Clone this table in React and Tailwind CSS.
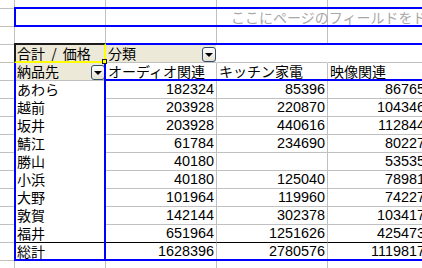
import React from "react";

// column widths incl. the 1px gridline on the right
const W = ["w-[15px]", "w-[91px]", "w-[111px]", "w-[111px]", "w-[100px]"];

const data = [
  ["あわら", "182324", "85396", "86765"],
  ["越前", "203928", "220870", "104346"],
  ["坂井", "203928", "440616", "112844"],
  ["鯖江", "61784", "234690", "80227"],
  ["勝山", "40180", "", "53535"],
  ["小浜", "40180", "125040", "78981"],
  ["大野", "101964", "119960", "74227"],
  ["敦賀", "142144", "302378", "103417"],
  ["福井", "651964", "1251626", "425473"],
];

function Cell({ i, r = "border-r-[#c0c0c0]", b = "border-b-[#c0c0c0]", className = "", children }) {
  return (
    <div className={`${W[i]} ${r} ${b} flex shrink-0 items-center border-r border-b ${className}`}>
      {children}
    </div>
  );
}

function EmptyRow({ h = "h-[18px]" }) {
  return (
    <div className={`flex ${h}`}>
      {W.map((_, i) => (
        <Cell key={i} i={i} />
      ))}
    </div>
  );
}

function DropButton() {
  return (
    <span className="flex h-[15px] w-[14px] items-center justify-center rounded-[3px] border border-[#2f4d69] bg-linear-to-b from-white to-[#e4e1d2]">
      <span className="h-0 w-0 border-x-[4px] border-t-[4px] border-x-transparent border-t-black" />
    </span>
  );
}

function Num({ children }) {
  return <span className="font-['Liberation_Sans',sans-serif] text-[14.4px]">{children}</span>;
}

function DataRow({ label, c, d, e, last }) {
  const b = last ? "border-b-black" : "border-b-[#c0c0c0]";
  return (
    <div className="flex h-[18px]">
      <Cell i={0} />
      <Cell i={1} b={last ? "border-b-black" : "border-b-white"} className="pl-[2px]">
        {label}
      </Cell>
      <Cell i={2} b={b} className="justify-end pr-[2px]">
        <Num>{c}</Num>
      </Cell>
      <Cell i={3} b={b} className="justify-end pr-[2px]">
        <Num>{d}</Num>
      </Cell>
      <Cell i={4} b={b} className="justify-end pr-[2px]">
        <Num>{e}</Num>
      </Cell>
    </div>
  );
}

export default function App() {
  return (
    <div className="relative h-[268px] w-[422px] overflow-hidden bg-white font-['Noto_Sans_CJK_JP',sans-serif] text-[14px] leading-[17px] text-black">
      <div className="flex flex-col">
        <EmptyRow h="h-[9px]" />
        <EmptyRow />
        <EmptyRow />

        {/* field buttons row */}
        <div className="flex h-[18px]">
          <Cell i={0} />
          <Cell i={1} className="bg-[#ece9d8] pl-[2px] whitespace-nowrap [word-spacing:3px]">
            合計 / 価格
          </Cell>
          <Cell i={2} r="border-r-white" className="items-end justify-between bg-[#ece9d8] pl-[2px]">
            <span className="self-center">分類</span>
            <DropButton />
          </Cell>
          <Cell i={3} r="border-r-white" />
          <Cell i={4} r="border-r-white" />
        </div>

        {/* header labels */}
        <div className="flex h-[18px]">
          <Cell i={0} />
          <Cell i={1} className="items-end justify-between bg-[#ece9d8] pl-[2px]">
            <span className="self-center">納品先</span>
            <DropButton />
          </Cell>
          <Cell i={2} className="pl-[2px] whitespace-nowrap">オーディオ関連</Cell>
          <Cell i={3} className="pl-[2px] whitespace-nowrap">キッチン家電</Cell>
          <Cell i={4} className="pl-[2px] whitespace-nowrap">映像関連</Cell>
        </div>

        {data.map((row, k) => (
          <DataRow key={row[0]} label={row[0]} c={row[1]} d={row[2]} e={row[3]} last={k === data.length - 1} />
        ))}

        <DataRow label="総計" c="1628396" d="2780576" e="1119817" />
        <EmptyRow />
      </div>

      {/* pivot drop-zone outlines */}
      <div className="absolute left-[14px] top-[7px] flex h-[20px] w-[640px] items-center border-2 border-[#0000ff] pl-[215px] whitespace-nowrap text-[#a8a8a8]">
        ここにページのフィールドをドラッグします
      </div>
      <div className="absolute left-[104px] top-[43px] h-[38px] w-[600px] border-2 border-[#0000ff]" />
      <div className="absolute left-[14px] top-[61px] h-[200px] w-[92px] border-2 border-[#0000ff]" />
      <div className="absolute left-[104px] top-[79px] h-[182px] w-[600px] border-2 border-[#0000ff]" />

      {/* active cell */}
      <div className="absolute left-[14px] top-[43px] h-[20px] w-[92px] border-2 border-t-[#1c1c1c] border-l-[#1c1c1c] border-r-[#ffff00] border-b-[#ffff00]" />
      <div className="absolute left-[102px] top-[59px] h-[5px] w-[5px] border border-[#1c1c1c] bg-[#ffff00]" />
    </div>
  );
}
